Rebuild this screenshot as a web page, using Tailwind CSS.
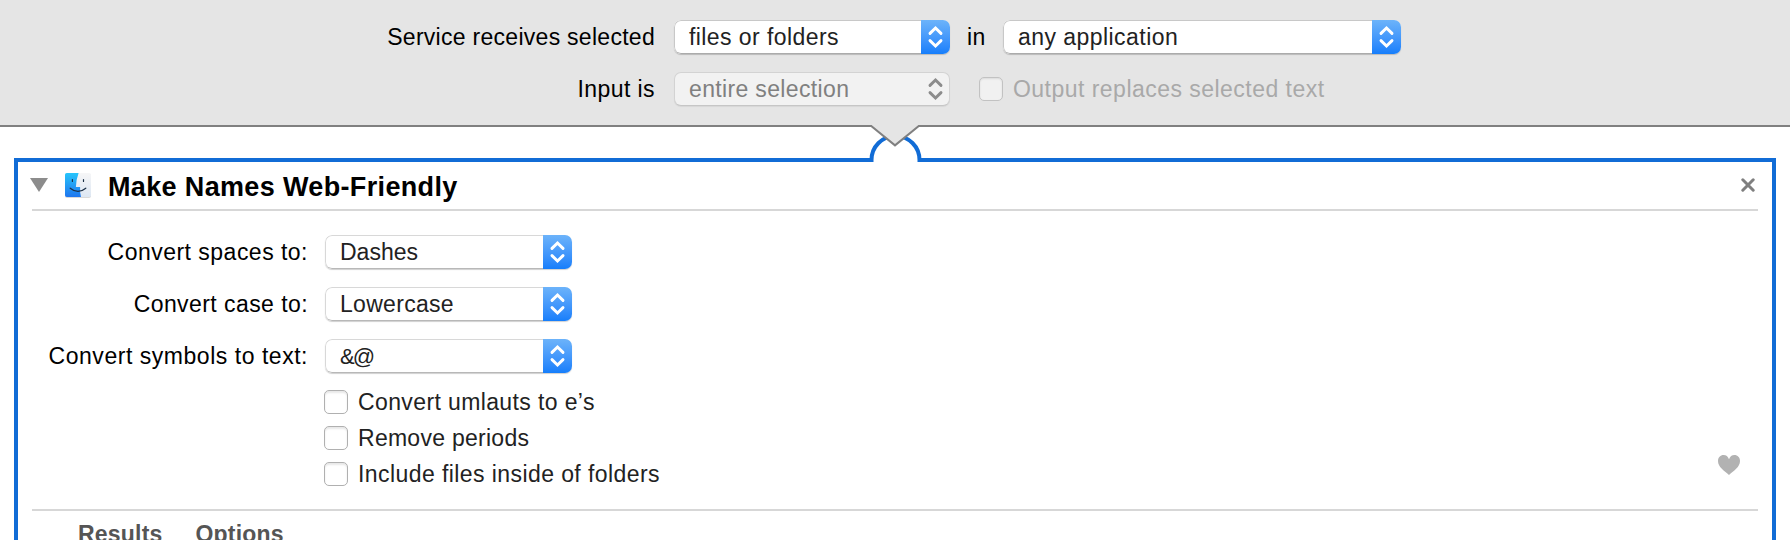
<!DOCTYPE html>
<html lang="en">
<head>
<meta charset="utf-8">
<title>Make Names Web-Friendly</title>
<script src="https://cdn.jsdelivr.net/npm/@tailwindcss/browser@4"></script>
</head>
<body class="relative h-[540px] w-[1790px] overflow-hidden bg-white font-['Liberation_Sans',Arial,sans-serif] text-[23px] leading-[34px] whitespace-nowrap text-black">
<svg class="hidden">
  <symbol id="chev" viewBox="0 0 29 34"><path d="M9 13.400 14.500 8l5.500 5.400M9 20.600l5.500 5.400 5.500-5.400" fill="none" stroke="currentColor" stroke-width="2.900" stroke-linecap="round" stroke-linejoin="miter"/></symbol>
</svg>

<header class="flex h-[127px] flex-col gap-[18px] border-b-2 border-[#808080] bg-[#e5e5e5] pt-5">
  <div class="flex h-[34px]">
    <div class="w-[655px] text-right tracking-[0.28px]">Service receives selected</div>
    <div class="ml-[19px] flex w-[276px] overflow-hidden rounded-[7px] bg-white shadow-[0_1px_1px_#00000030]">
      <span class="flex-1 rounded-l-[7px] border border-r-0 border-[#c8c8c8] border-b-[#ababab] pl-[14px] leading-[33px] tracking-[0.42px] text-[#222]">files or folders</span>
      <svg class="h-[34px] w-[29px] bg-linear-to-b from-[#6cb3fa] to-[#157efb] text-white"><use href="#chev"/></svg>
    </div>
    <div class="ml-[17px] w-[36px] tracking-[0.4px]">in</div>
    <div class="flex w-[398px] overflow-hidden rounded-[7px] bg-white shadow-[0_1px_1px_#00000030]">
      <span class="flex-1 rounded-l-[7px] border border-r-0 border-[#c8c8c8] border-b-[#ababab] pl-[14px] leading-[33px] tracking-[0.45px] text-[#222]">any application</span>
      <svg class="h-[34px] w-[29px] bg-linear-to-b from-[#6cb3fa] to-[#157efb] text-white"><use href="#chev"/></svg>
    </div>
  </div>
  <div class="flex h-[34px]">
    <div class="w-[655px] text-right tracking-[0.43px]">Input is</div>
    <div class="ml-[19px] flex w-[276px] rounded-[7px] border border-[#d3d3d3] border-b-[#c6c6c6] bg-[#f2f2f2] shadow-[0_1px_1px_#00000010]">
      <span class="flex-1 pl-[14px] leading-[33px] tracking-[0.35px] text-[#808080]">entire selection</span>
      <svg class="-mt-px -mr-px h-[34px] w-[29px] text-[#8c8c8c]"><use href="#chev"/></svg>
    </div>
    <div class="mt-[5px] ml-[29px] size-6 rounded-[5px] border border-[#c2c2c2] bg-[#f1f1f1] shadow-[inset_0_1px_2px_#00000018]"></div>
    <div class="ml-[10px] tracking-[0.47px] text-[#a9a9a9]">Output replaces selected text</div>
  </div>
</header>

<main class="mx-[14px] mt-[31px] h-[382px] overflow-hidden border-4 border-b-0 border-[#116cd6] px-[14px]">
  <div class="flex h-[49px] items-center border-b-2 border-[#d7d7d7]">
    <svg class="-ml-[2px] h-[14px] w-[18px] -translate-y-px" viewBox="0 0 18 14"><path d="M0 0h18L9 14z" fill="#8c8c8c"/></svg>
    <svg class="ml-[16px] h-[28px] w-[30px] -translate-y-px" viewBox="0 0 30 28">
      <defs>
        <linearGradient id="fb" x1="0" y1="0" x2="0" y2="1"><stop stop-color="#27c5fb"/><stop offset="1" stop-color="#1f76ee"/></linearGradient>
        <linearGradient id="fw" x1="0" y1="0" x2="0" y2="1"><stop stop-color="#f6f6f7"/><stop offset="1" stop-color="#dde7f3"/></linearGradient>
      </defs>
      <rect x="1" y="3" width="26" height="24" rx="2" fill="#00000026"/>
      <rect x="1" y="2" width="26" height="24" rx="1.800" fill="url(#fw)"/>
      <path d="M2.800 2H14.600Q12 9 11.900 16h4.200Q15.700 21 17 26H2.800Q1 26 1 24.200V3.800Q1 2 2.800 2z" fill="url(#fb)"/>
      <path d="M8.400 8.500v2M19.500 8.500v2M6.200 17.200Q14 23.600 21.800 17.200" fill="none" stroke="#1c3047" stroke-width="1.200" stroke-linecap="round"/>
    </svg>
    <h1 class="ml-[14px] flex-1 pt-[3px] text-[27px] font-bold tracking-[0.35px]">Make Names Web-Friendly</h1>
    <svg class="mr-[3px] h-[14px] w-[14px] -translate-y-px" viewBox="0 0 14 14"><path d="M1.800 1.800l10.400 10.400M12.200 1.800 1.800 12.200" stroke="#7f7f7f" stroke-width="3" stroke-linecap="round"/></svg>
  </div>

  <section class="relative h-[300px] border-b-2 border-[#d7d7d7] pt-6">
    <div class="flex flex-col gap-[18px]">
      <div class="flex h-[34px]">
        <div class="w-[276px] text-right tracking-[0.48px]">Convert spaces to:</div>
        <div class="ml-[17px] flex w-[247px] overflow-hidden rounded-[7px] bg-white shadow-[0_1px_1px_#00000030]">
          <span class="flex-1 rounded-l-[7px] border border-r-0 border-[#d8d8d8] border-b-[#b8b8b8] pl-[14px] leading-[33px] text-[#222]">Dashes</span>
          <svg class="h-[34px] w-[29px] bg-linear-to-b from-[#6cb3fa] to-[#157efb] text-white"><use href="#chev"/></svg>
        </div>
      </div>
      <div class="flex h-[34px]">
        <div class="w-[276px] text-right tracking-[0.43px]">Convert case to:</div>
        <div class="ml-[17px] flex w-[247px] overflow-hidden rounded-[7px] bg-white shadow-[0_1px_1px_#00000030]">
          <span class="flex-1 rounded-l-[7px] border border-r-0 border-[#d8d8d8] border-b-[#b8b8b8] pl-[14px] leading-[33px] tracking-[0.3px] text-[#222]">Lowercase</span>
          <svg class="h-[34px] w-[29px] bg-linear-to-b from-[#6cb3fa] to-[#157efb] text-white"><use href="#chev"/></svg>
        </div>
      </div>
      <div class="flex h-[34px]">
        <div class="w-[276px] text-right tracking-[0.53px]">Convert symbols to text:</div>
        <div class="ml-[17px] flex w-[247px] overflow-hidden rounded-[7px] bg-white shadow-[0_1px_1px_#00000030]">
          <span class="flex-1 rounded-l-[7px] border border-r-0 border-[#d8d8d8] border-b-[#b8b8b8] pl-[14px] text-[22px] leading-[33px] tracking-[-1.8px] text-[#222]">&amp;@</span>
          <svg class="h-[34px] w-[29px] bg-linear-to-b from-[#6cb3fa] to-[#157efb] text-white"><use href="#chev"/></svg>
        </div>
      </div>
    </div>
    <div class="mt-[11px] ml-[292px] flex flex-col text-[#222]">
      <label class="flex h-9 items-center gap-[10px] tracking-[0.38px]"><span class="size-6 rounded-[5px] border border-[#b0b0b0] bg-white shadow-[inset_0_2px_2px_#00000018]"></span>Convert umlauts to e’s</label>
      <label class="flex h-9 items-center gap-[10px] tracking-[0.27px]"><span class="size-6 rounded-[5px] border border-[#b0b0b0] bg-white shadow-[inset_0_2px_2px_#00000018]"></span>Remove periods</label>
      <label class="flex h-9 items-center gap-[10px] tracking-[0.42px]"><span class="size-6 rounded-[5px] border border-[#b0b0b0] bg-white shadow-[inset_0_2px_2px_#00000018]"></span>Include files inside of folders</label>
    </div>
    <svg class="absolute right-[18px] bottom-[34px] h-[20px] w-[22px]" viewBox="0 0 22 20"><path d="M11 20C6 15.500 0 12 0 6 0 2.400 2.400 0 5.600 0 8.200 0 10 1.600 11 4.200 12 1.600 13.800 0 16.400 0 19.600 0 22 2.400 22 6c0 6-6 9.500-11 14z" fill="#b2b2b2"/></svg>
  </section>
  <footer class="flex gap-[33px] pt-[6px] pl-[46px] font-bold text-[#555]">
    <span class="tracking-[0.2px]">Results</span><span class="tracking-[0.2px]">Options</span>
  </footer>
</main>

<svg class="absolute top-[125px] left-[865px] h-[40px] w-[60px]" viewBox="0 0 60 40">
  <path d="M6.500 32h48v6h-48z" fill="#fff"/>
  <path d="M4 35h2.500A24 24 0 0 1 54.500 35H57" fill="none" stroke="#116cd6" stroke-width="4"/>
  <path d="M5.600 0 30 20.400 54.400 0z" fill="#e5e5e5"/>
  <path d="M5 1h1.200L30 20.400 53.800 1H55" fill="none" stroke="#808080" stroke-width="2"/>
</svg>
</body>
</html>
